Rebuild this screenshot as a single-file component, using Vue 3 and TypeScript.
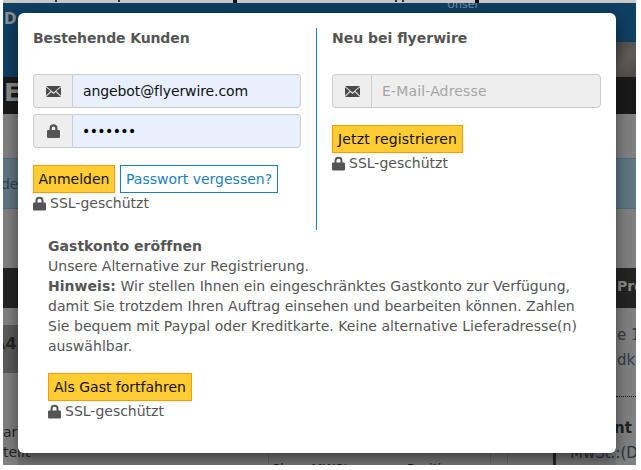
<script setup lang="ts">
const ssl = 'SSL-geschützt'
</script>

<template>
  <div class="page">
    <div class="strip">
      <i class="mark m1"></i><i class="mark m2"></i><i class="mark m3"></i><i class="mark m4"></i><i class="mark m5"></i><i class="mark m6"></i>
    </div>
    <div class="side left">
      <div class="row navy tall-left"><span class="frag d">D</span></div>
      <div class="row black"><span class="frag e">E</span></div>
      <div class="row grey h44"></div>
      <div class="row blue"><span class="frag lde">lde</span></div>
      <div class="row grey h59"></div>
      <div class="row dark"></div>
      <div class="row grey h17"></div>
      <div class="row mid"><span class="frag a4">A4</span></div>
      <div class="row grey fill open">
        <span class="frag ar">ar</span>
        <span class="frag teilt">teilt</span>
      </div>
    </div>
    <div class="side centre">
      <div class="row navy top-centre"><span class="frag unser">Unser</span></div>
      <div class="bottom-row">
        <span class="clip show">Show MWSt</span>
        <span class="clip pos">Position</span>
        <span class="tick t1"></span>
        <span class="tick t2"></span>
        <span class="tick t4"></span>
        <span class="tick t3"></span>
      </div>
    </div>
    <div class="side right">
      <div class="row navy h39"></div>
      <div class="row photo"></div>
      <div class="row black"></div>
      <div class="row grey h44"></div>
      <div class="row blue"></div>
      <div class="row grey h59"></div>
      <div class="row dark"><span class="frag pre">Pre</span></div>
      <div class="row grey fill open">
        <span class="frag e1">e 1</span>
        <span class="frag dk">dk</span>
        <span class="dots"></span>
        <span class="frag nt">nt</span>
        <span class="frag mw">MwSt.:(D</span>
      </div>
    </div>

    <section class="modal">
      <div class="columns">
        <div class="col col-left">
          <h2 class="tight">Bestehende Kunden</h2>
          <div class="fields">
            <div class="field">
              <span class="addon">
                <svg class="ic-mail" viewBox="0 0 15 11"><path d="M0 0h15L7.500 6.500zM0 1.200l4.700 3.900L0 9.700zM15 1.200v8.500l-4.700-4.600zM0 11l5.300-5 2.200 1.900L9.700 6 15 11z"/></svg>
              </span>
              <input class="ctl filled mailtext" type="text" value="angebot@flyerwire.com" readonly />
            </div>
            <div class="field">
              <span class="addon">
                <svg class="ic-lock" viewBox="0 0 13 14"><path d="M2.500 6V4.200a4 4 0 0 1 8 0V6h1.100c.8 0 1.400.5 1.400 1.300v5.400c0 .8-.6 1.300-1.400 1.300H1.400C.6 14 0 13.500 0 12.700V7.300C0 6.500.6 6 1.400 6zm2.300 0h3.400V4.300a1.700 1.700 0 0 0-3.400 0z" fill-rule="evenodd"/></svg>
              </span>
              <input class="ctl filled pw" type="password" value="1234567" readonly />
            </div>
          </div>
          <div class="actions">
            <button class="btn login" type="button">Anmelden</button>
            <a class="btn-link">Passwort vergessen?</a>
          </div>
          <div class="ssl">
            <svg class="ic-ssl" viewBox="0 0 13 14"><path d="M2.500 6V4.200a4 4 0 0 1 8 0V6h1.100c.8 0 1.400.5 1.400 1.300v5.400c0 .8-.6 1.300-1.400 1.300H1.400C.6 14 0 13.500 0 12.700V7.300C0 6.500.6 6 1.400 6zm2 0h4V4.300a2 2 0 0 0-4 0z" fill-rule="evenodd"/></svg>
            {{ ssl }}
          </div>
        </div>
        <div class="col col-right">
          <h2>Neu bei flyerwire</h2>
          <div class="fields">
            <div class="field">
              <span class="addon">
                <svg class="ic-mail" viewBox="0 0 15 11"><path d="M0 0h15L7.500 6.500zM0 1.200l4.700 3.900L0 9.700zM15 1.200v8.500l-4.700-4.600zM0 11l5.300-5 2.200 1.900L9.700 6 15 11z"/></svg>
              </span>
              <input class="ctl empty" type="text" placeholder="E-Mail-Adresse" readonly />
            </div>
          </div>
          <div class="actions">
            <button class="btn wide" type="button">Jetzt registrieren</button>
          </div>
          <div class="ssl">
            <svg class="ic-ssl" viewBox="0 0 13 14"><path d="M2.500 6V4.200a4 4 0 0 1 8 0V6h1.100c.8 0 1.400.5 1.400 1.300v5.400c0 .8-.6 1.300-1.400 1.300H1.400C.6 14 0 13.500 0 12.700V7.300C0 6.500.6 6 1.400 6zm2 0h4V4.300a2 2 0 0 0-4 0z" fill-rule="evenodd"/></svg>
            {{ ssl }}
          </div>
        </div>
      </div>
      <div class="guest">
        <p>
          <b>Gastkonto eröffnen</b><br />
          Unsere Alternative zur Registrierung.<br />
          <b>Hinweis:</b> Wir stellen Ihnen ein eingeschränktes Gastkonto zur Verfügung,<br />
          damit Sie trotzdem Ihren Auftrag einsehen und bearbeiten können. Zahlen<br />
          Sie bequem mit Paypal oder Kreditkarte. Keine alternative Lieferadresse(n)<br />
          auswählbar.
        </p>
        <button class="btn" type="button">Als Gast fortfahren</button>
        <div class="ssl">
          <svg class="ic-ssl" viewBox="0 0 13 14"><path d="M2.500 6V4.200a4 4 0 0 1 8 0V6h1.100c.8 0 1.400.5 1.400 1.300v5.400c0 .8-.6 1.300-1.400 1.300H1.400C.6 14 0 13.500 0 12.700V7.300C0 6.500.6 6 1.400 6zm2 0h4V4.300a2 2 0 0 0-4 0z" fill-rule="evenodd"/></svg>
          {{ ssl }}
        </div>
      </div>
    </section>
  </div>
</template>

<style>
html, body { margin: 0; background: #fff; }
</style>

<style scoped>
.page {
  position: relative;
  margin-left: 3px;
  width: 633px;
  height: 465px;
  display: grid;
  grid-template-columns: 15px 1fr 20px;
  grid-template-rows: 3px 1fr;
  background: #808080;
  overflow: hidden;
  font-family: "DejaVu Sans", sans-serif;
  font-size: 14px;
  color: #555;
}
.strip { grid-column: 1 / -1; position: relative; background: #c8c8c8; }
.mark { position: absolute; top: 0; height: 2px; width: 2px; background: #333; }
.m1 { left: 52px; }
.m2 { left: 115px; }
.m3 { left: 230px; width: 4px; height: 3px; background: #111; }
.m4 { left: 392px; }
.m5 { left: 399px; }
.m6 { left: 472px; width: 4px; height: 3px; background: #111; }
.side { display: flex; flex-direction: column; min-width: 0; }
.row { position: relative; overflow: hidden; flex: none; }
.row.open { overflow: visible; }
.navy { background: #0f3f62; }
.tall-left { height: 74px; }
.h39 { height: 39px; }
.top-centre { height: 39px; }
.photo { height: 35px; background: linear-gradient(135deg, #4f4a47, #635d59 50%, #4c4744); }
.black { height: 37px; background: #1a1a1a; }
.grey { background: #808080; }
.h44 { height: 44px; }
.h59 { height: 59px; }
.h17 { height: 17px; }
.blue { height: 51px; background: #5f7783; border-top: 1px solid #4b6c80; border-bottom: 1px solid #4b6c80; box-sizing: border-box; }
.dark { height: 40px; background: #242424; }
.mid { height: 48px; background: #5a5a5a; }
.fill { flex: 1; }

.centre { justify-content: space-between; }
.bottom-row { position: relative; height: 12px; background: #757575; overflow: hidden; }
.tick { position: absolute; top: 0; bottom: 0; width: 1px; background: #666; }
.t1 { left: 250px; }
.t2 { left: 472px; }
.t4 { left: 489px; }
.t3 { left: 535px; width: 3px; background: #222; }
.clip { position: absolute; top: 8px; font-size: 13px; color: #1c1c1c; white-space: nowrap; }
.show { left: 254px; }
.pos { left: 389px; }

.frag { position: absolute; white-space: nowrap; z-index: 1; }
.d { left: 1px; top: 7px; font-size: 15px; font-weight: 700; color: #8a8f93; }
.e { left: 1px; top: 1px; font-size: 25px; font-weight: 700; color: #8a8a8a; }
.lde { left: -6px; top: 17px; color: #31434d; }
.a4 { left: -10px; top: 9px; font-size: 16px; font-weight: 700; color: #252525; }
.ar { left: 0; top: 51px; color: #252525; }
.teilt { left: 0; top: 71px; color: #252525; }
.unser { left: 429px; top: -5px; font-size: 11px; color: #7c8c98; }
.pre { left: 1px; top: 10px; font-weight: 700; font-size: 14px; color: #8a8a8a; }
.e1 { left: 1px; top: 18px; font-size: 15px; color: #333b44; }
.dk { left: 1px; top: 43px; font-size: 15px; color: #333b44; }
.dots { position: absolute; left: 0; right: 0; top: 88px; border-top: 1px dotted #111; }
.nt { left: -2px; top: 111px; font-size: 15px; font-weight: 700; color: #222; }
.mw { left: -46px; top: 136px; font-size: 15px; color: #2b3240; }

.modal {
  position: absolute;
  z-index: 2;
  left: 15px;
  top: 13px;
  width: 598px;
  height: 440px;
  box-sizing: border-box;
  background: #fff;
  border-radius: 6px;
  box-shadow: 0 5px 15px rgba(0, 0, 0, 0.5);
}
.columns { display: flex; padding-top: 15px; }
.col { box-sizing: border-box; height: 202px; }
.col-left { width: 299px; padding-left: 15px; border-right: 1px solid #1a7fc1; }
.col-right { padding-left: 15px; width: 284px; }
h2 { margin: 0; font-size: 14px; line-height: 20px; font-weight: 700; color: #555; }
.tight { letter-spacing: -0.12px; }
.fields { margin-top: 26px; display: flex; flex-direction: column; gap: 6px; width: 268px; }
.col-right .fields { width: 269px; }
.field { display: flex; height: 34px; }
.addon {
  width: 39px;
  box-sizing: border-box;
  display: flex;
  align-items: center;
  justify-content: center;
  background: #eee;
  border: 1px solid #ccc;
  border-right: 0;
  border-radius: 4px 0 0 4px;
  flex: none;
}
.ctl {
  flex: 1;
  min-width: 0;
  box-sizing: border-box;
  padding: 0 10px;
  border: 1px solid #ccc;
  border-radius: 0 4px 4px 0;
  outline: none;
  font: 14px "DejaVu Sans", sans-serif;
  color: #111;
}
.filled { background: #e8f0fe; }
.mailtext { letter-spacing: -0.1px; }
.empty { background: #eee; letter-spacing: 0.15px; }
.empty::placeholder { color: #a5a5a5; opacity: 1; }
.pw { padding-left: 9px; letter-spacing: -0.6px; color: #000; }
.ic-mail { width: 15px; height: 11px; fill: #4a4a4a; }
.ic-lock { width: 13px; height: 14px; fill: #555; }
.ic-ssl { width: 13px; height: 15px; fill: #555; flex: none; }
.actions { display: flex; gap: 5px; margin-top: 17px; }
.btn {
  box-sizing: border-box;
  height: 28px;
  padding: 0 5px;
  background: #fc3;
  border: 1px solid #f90;
  border-radius: 0;
  font: 14px "DejaVu Sans", sans-serif;
  color: #111;
  white-space: nowrap;
}
.login { width: 82px; padding: 0; }
.wide { letter-spacing: 0.15px; }
.btn-link {
  box-sizing: border-box;
  height: 28px;
  line-height: 26px;
  padding: 0 5px;
  border: 1px solid #1a7fc1;
  color: #1a7fc1;
  font-size: 14px;
  white-space: nowrap;
}
.ssl { display: flex; align-items: center; gap: 4px; height: 20px; line-height: 20px; font-size: 14px; color: #555; }
.guest { padding: 6px 0 0 30px; }
.guest p { margin: 0 0 17px; line-height: 20px; font-size: 14px; color: #555; letter-spacing: 0.04px; }
</style>
